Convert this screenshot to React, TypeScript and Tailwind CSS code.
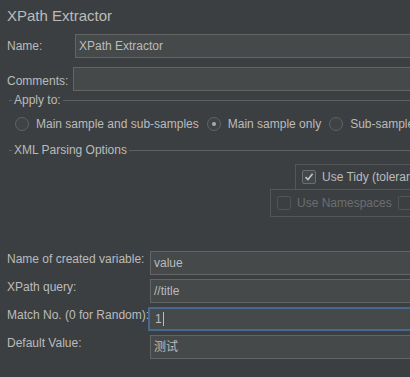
const font = "font-['Liberation_Sans','Noto_Sans_CJK_SC',sans-serif]";

function Field({ value, focused = false, caret = false }: { value: string; focused?: boolean; caret?: boolean }) {
  return (
    <div
      className={
        focused
          ? 'ml-[-2px] flex h-[24px] w-[300px] shrink-0 items-center border-2 border-[#46698f] bg-[#45494a] pl-[5px]'
          : 'flex h-[24px] w-[300px] shrink-0 items-center border border-[#646464] bg-[#45494a] pl-[3px]'
      }
    >
      <span className="text-[12px] text-[#bbbbbb]">{value}</span>
      {caret && <span className="ml-px h-[14px] w-px bg-[#bbbbbb]" />}
    </div>
  );
}

function Legend({ text }: { text: string }) {
  return (
    <div className="flex h-[16px] items-center">
      <div className="ml-[9px] h-px w-[3px] bg-[#5e6163]" />
      <span className="ml-[2px] text-[12px] leading-[16px] text-[#bbbbbb]">{text}</span>
      <div className="ml-[2px] h-px flex-1 bg-[#5e6163]" />
    </div>
  );
}

function Radio({ label, checked = false }: { label: string; checked?: boolean }) {
  return (
    <div className="flex shrink-0 items-center gap-[7px]">
      <div className="flex h-[14px] w-[14px] items-center justify-center rounded-full border border-[#5f6466] bg-[#404345]">
        {checked && <div className="h-[4px] w-[4px] rounded-full bg-[#a9acae]" />}
      </div>
      <span className="whitespace-nowrap text-[12px] text-[#bbbbbb]">{label}</span>
    </div>
  );
}

function Check({ checked = false, disabled = false }: { checked?: boolean; disabled?: boolean }) {
  return (
    <div
      className={
        disabled
          ? 'h-[14px] w-[14px] shrink-0 rounded-[2px] border border-[#525558]'
          : 'flex h-[14px] w-[14px] shrink-0 items-center justify-center rounded-[2px] border border-[#6b6e70] bg-[#43494a]'
      }
    >
      {checked && (
        <svg width="10" height="10" viewBox="0 0 10 10">
          <path d="M1.5 5.2 L4 7.6 L8.6 1.8" fill="none" stroke="#c4c4c4" strokeWidth="1.6" />
        </svg>
      )}
    </div>
  );
}

function Row({ label, children }: { label: string; children: React.ReactNode }) {
  return (
    <div className="flex h-[24px] items-start">
      <span className="w-[150px] shrink-0 whitespace-nowrap pl-[7px] text-[12px] leading-[16px] text-[#bbbbbb]">{label}</span>
      {children}
    </div>
  );
}

export default function App() {
  return (
    <div className={`h-[377px] w-[410px] overflow-hidden bg-[#3c3f41] ${font}`}>
      <div className="flex h-[32px] items-center pl-[7px] text-[15px] text-[#bbbbbb]">XPath Extractor</div>

      <div className="mt-[2px] flex h-[24px] items-center">
        <span className="w-[75px] shrink-0 pl-[7px] text-[12px] text-[#bbbbbb]">Name:</span>
        <div className="flex h-[24px] w-[400px] shrink-0 items-center border border-[#646464] bg-[#45494a] pl-[3px]">
          <span className="text-[12px] text-[#bbbbbb]">XPath Extractor</span>
        </div>
      </div>

      <div className="mt-[9px] flex h-[24px] items-center">
        <span className="w-[73px] shrink-0 pl-[7px] pt-[3px] text-[12px] text-[#bbbbbb]">Comments:</span>
        <div className="h-[24px] w-[400px] shrink-0 border border-[#646464] bg-[#45494a]" />
      </div>

      <div className="mt-[1px]">
        <Legend text="Apply to:" />
      </div>

      <div className="mt-[8px] flex h-[16px] items-center gap-[8px] pl-[15px]">
        <Radio label="Main sample and sub-samples" />
        <Radio label="Main sample only" checked />
        <Radio label="Sub-samples only" />
      </div>

      <div className="mt-[10px]">
        <Legend text="XML Parsing Options" />
      </div>

      <div className="mt-[6px] flex flex-col items-end">
        <div className="flex h-[26px] w-[115px] items-center gap-[6px] border border-r-0 border-[#54575a] pl-[6px]">
          <Check checked />
          <span className="whitespace-nowrap text-[12px] text-[#bbbbbb]">Use Tidy (tolerant parser)</span>
        </div>
        <div className="mt-[-1px] flex h-[28px] w-[140px] items-center gap-[6px] border border-r-0 border-[#54575a] pl-[6px]">
          <Check disabled />
          <span className="whitespace-nowrap text-[12px] text-[#6b6e70]">Use Namespaces</span>
          <Check disabled />
        </div>
      </div>

      <div className="mt-[34px] flex flex-col gap-[4px]">
        <Row label="Name of created variable:">
          <Field value="value" />
        </Row>
        <Row label="XPath query:">
          <Field value="//title" />
        </Row>
        <Row label="Match No. (0 for Random):">
          <Field value="1" focused caret />
        </Row>
        <Row label="Default Value:">
          <Field value="测试" />
        </Row>
      </div>
    </div>
  );
}
